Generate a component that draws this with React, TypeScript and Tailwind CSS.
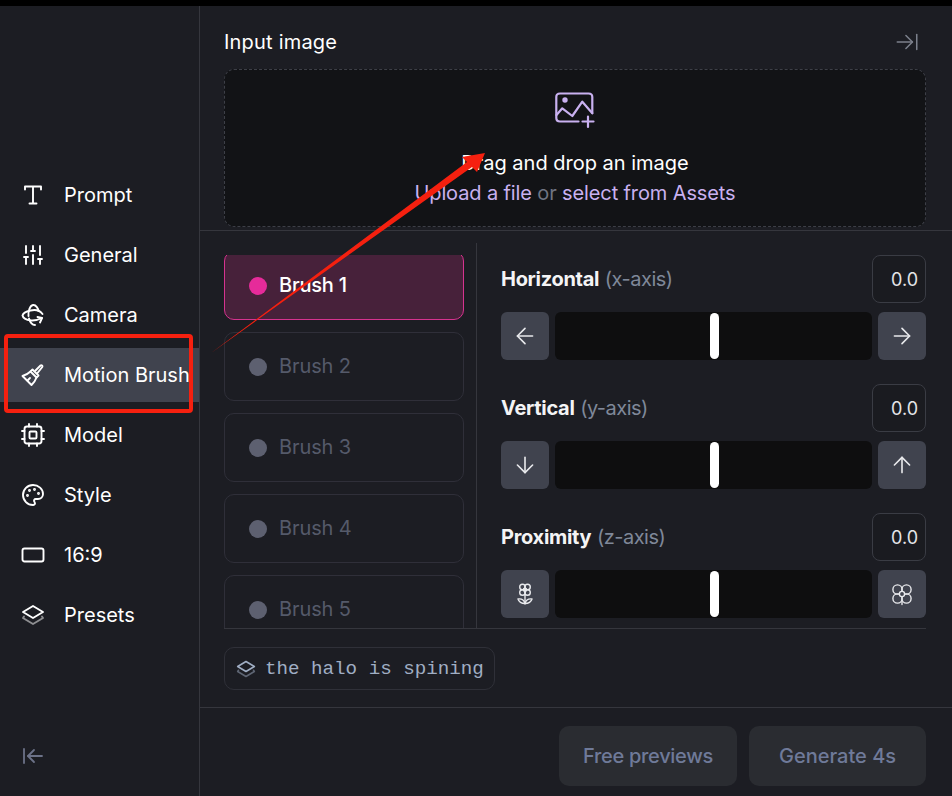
import { ArrowDown, ArrowLeft, ArrowLeftToLine, ArrowRight, ArrowRightToLine, ArrowUp, Palette, SlidersVertical } from "lucide-react";
import type { ReactNode } from "react";

const iconProps = {
  width: 24,
  height: 24,
  viewBox: "0 0 24 24",
  fill: "none",
  stroke: "currentColor",
  strokeWidth: 1.9,
  strokeLinecap: "round" as const,
  strokeLinejoin: "round" as const,
};

function TextIcon() {
  return (
    <svg {...iconProps}>
      <path d="M4 6.5V3.5H20V6.5M12 3.5V20.5M8.5 20.5H15.5" />
    </svg>
  );
}

function OrbitIcon() {
  return (
    <svg {...iconProps}>
      <path d="M21.5 11C19 7.5 14 6.5 9.5 7.5C5 8.5 2 10.5 1.5 12.5C2 15 5.5 17 10 17.5C13 17.8 17 17 21 15" />
      <path d="M7.5 13C7 8 9 2.5 12 2C15 1.5 17.5 6 17.5 8" />
      <path d="M8 15.5C9 19 11 22 14 22" />
      <path d="M16.5 14L21 15L19 19.5" />
    </svg>
  );
}

function BrushIcon() {
  return (
    <svg {...iconProps}>
      <path d="M14.5 7.5L19.5 2.5C20.5 1.7 22 3 21.3 4L16.5 10" />
      <path d="M11.5 6.5L17.5 12.5L15.5 14.5L9.5 8.5Z" />
      <path d="M9.5 8.5C7 11 4.5 12 1.5 13L10.5 22C12.5 20 14.5 17.5 15.5 14.5" />
      <path d="M6.5 17.5L9 15" />
    </svg>
  );
}

function ChipIcon() {
  return (
    <svg {...iconProps}>
      <rect x="3.5" y="3.5" width="17" height="17" rx="2.5" />
      <rect x="8.5" y="8.5" width="7" height="7" rx="1" />
      <path d="M8 1V3.5M16 1V3.5M8 20.5V23M16 20.5V23M1 8H3.5M1 16H3.5M20.5 8H23M20.5 16H23" />
    </svg>
  );
}

function RatioIcon() {
  return (
    <svg {...iconProps}>
      <rect x="1.5" y="5.5" width="21" height="13" rx="2" />
    </svg>
  );
}

function LayersIcon({ size = 24 }: { size?: number }) {
  return (
    <svg {...iconProps} width={size} height={size}>
      <path d="M12 3L22 9L12 15L2 9Z" />
      <path d="M3 13.5L2 15L12 21L22 15L21 13.5" className="opacity-50" />
    </svg>
  );
}

function ImagePlusIcon() {
  return (
    <svg width="40" height="38" viewBox="0 0 40 38" fill="none" stroke="currentColor" strokeWidth="2.2" strokeLinecap="round" strokeLinejoin="round">
      <path d="M23.5 29.5H5C2.8 29.5 1.3 28 1.3 26V5C1.3 3 2.8 1.5 5 1.5H33.5C35.8 1.5 37.3 3 37.3 5V21" />
      <path d="M1.5 23L7.3 16.3L17.3 24L27.3 9.7L37.3 21.3" />
      <circle cx="10" cy="8" r="1.6" fill="currentColor" />
      <path d="M33 24.5V35M27.5 29.5H38.5" />
    </svg>
  );
}

function SmallFlowerIcon() {
  return (
    <svg {...iconProps} strokeWidth={1.4}>
      <circle cx="9.5" cy="5" r="2.8" />
      <circle cx="14.5" cy="5" r="2.8" />
      <circle cx="9.5" cy="10.5" r="2.8" />
      <circle cx="14.5" cy="10.5" r="2.8" />
      <circle cx="12" cy="7.8" r="1.6" />
      <path d="M12 13.5V22" />
      <path d="M12 21.5C8.5 21.5 6 20 5 17C8 16.5 11 18 12 21.5C13 18 16 16.5 19 17C18 20 15.5 21.5 12 21.5Z" />
    </svg>
  );
}

function BigFlowerIcon() {
  return (
    <svg {...iconProps} strokeWidth={1.4}>
      <circle cx="7.5" cy="7.5" r="4.6" />
      <circle cx="16.5" cy="7.5" r="4.6" />
      <circle cx="7.5" cy="16.5" r="4.6" />
      <circle cx="16.5" cy="16.5" r="4.6" />
      <circle cx="12" cy="12" r="2.6" fill="#40434e" />
      <path d="M12 20V22.5" />
    </svg>
  );
}

const navItems: { label: string; icon: ReactNode; active?: boolean }[] = [
  { label: "Prompt", icon: <TextIcon /> },
  { label: "General", icon: <SlidersVertical size={24} strokeWidth={1.9} /> },
  { label: "Camera", icon: <OrbitIcon /> },
  { label: "Motion Brush", icon: <BrushIcon />, active: true },
  { label: "Model", icon: <ChipIcon /> },
  { label: "Style", icon: <Palette size={24} strokeWidth={1.9} /> },
  { label: "16:9", icon: <RatioIcon /> },
  { label: "Presets", icon: <LayersIcon /> },
];

function Sidebar() {
  return (
    <aside className="flex w-[200px] shrink-0 flex-col border-r border-[#35363d] pt-[162px] pb-[28px]">
      <nav className="flex flex-col gap-[6px]">
        {navItems.map((item) => (
          <div
            key={item.label}
            className={
              item.active
                ? "flex h-[54px] items-center gap-[19px] bg-[#40434e] pl-[21px] text-white"
                : "flex h-[54px] items-center gap-[19px] pl-[21px] text-white"
            }
          >
            <span className="flex w-[24px] shrink-0 justify-center">{item.icon}</span>
            <span className="whitespace-nowrap text-[20px] leading-none">{item.label}</span>
          </div>
        ))}
      </nav>
      <div className="mt-auto pl-[21px] text-[#6c7288]">
        <ArrowLeftToLine size={24} strokeWidth={1.8} />
      </div>
    </aside>
  );
}

function BrushRow({ name, active }: { name: string; active?: boolean }) {
  return (
    <div
      className={
        active
          ? "flex h-[69px] shrink-0 items-center gap-[12px] rounded-[10px] border border-[#d6338f] bg-[#47213a] pl-[24px] text-white"
          : "flex h-[69px] shrink-0 items-center gap-[12px] rounded-[10px] border border-[#2f2f39] pl-[24px] text-[#555a6a]"
      }
    >
      <span className={active ? "h-[18px] w-[18px] rounded-full bg-[#e62b9a]" : "h-[18px] w-[18px] rounded-full bg-[#5d6070]"} />
      <span className={active ? "pb-[2px] text-[20px] font-medium tracking-[-0.2px]" : "pb-[2px] text-[20px] tracking-[-0.1px]"}>{name}</span>
    </div>
  );
}

function SliderControl({ title, axis, left, right }: { title: string; axis: string; left: ReactNode; right: ReactNode }) {
  return (
    <div className="flex flex-col gap-[9px]">
      <div className="flex h-[48px] items-center justify-between">
        <div className="text-[20px]">
          <span className="font-bold tracking-[-0.3px] text-[#f4f4f5]">{title}</span>{" "}
          <span className="tracking-[-0.5px] text-[#7f8899]">{axis}</span>
        </div>
        <div className="flex h-[48px] w-[54px] items-center justify-end rounded-[8px] border border-[#3a3c44] bg-[#1a1b20] pr-[7px] text-[18px] text-[#e4e5e8]">
          0.0
        </div>
      </div>
      <div className="flex h-[48px] gap-[6px]">
        <button className="flex w-[48px] shrink-0 items-center justify-center rounded-[6px] bg-[#40434e] text-[#e8e9ec]">{left}</button>
        <div className="flex flex-1 items-center justify-center rounded-[6px] bg-[#0e0e0f]">
          <span className="h-[46px] w-[9px] translate-x-[1px] rounded-full bg-white" />
        </div>
        <button className="flex w-[48px] shrink-0 items-center justify-center rounded-[6px] bg-[#40434e] text-[#e8e9ec]">{right}</button>
      </div>
    </div>
  );
}

function Annotations() {
  return (
    <>
      <div className="absolute left-[4px] top-[334px] h-[79px] w-[189px] rounded-[4px] border-[4px] border-[#f5200f]" />
      <svg className="absolute left-0 top-0" width="952" height="796" viewBox="0 0 952 796" fill="#f5200f">
        <path d="M211 353L467 162L462 157L485 153L477 172L472 167Z" />
      </svg>
    </>
  );
}

export default function App() {
  return (
    <div className="relative flex h-[796px] w-[952px] flex-col overflow-hidden bg-[#1c1d23] font-['Inter',sans-serif] text-white">
      <div className="h-[6px] shrink-0 bg-black" />
      <div className="flex min-h-0 flex-1">
        <Sidebar />
        <main className="flex min-w-0 flex-1 flex-col">
          <section className="border-b border-[#35363d] pr-[26px] pl-[24px] pb-[3px]">
            <div className="flex h-[63px] items-center justify-between pt-[9px]">
              <h2 className="text-[20px] font-normal tracking-[0.2px]">Input image</h2>
              <ArrowRightToLine size={26} strokeWidth={1.4} className="mr-[6px] text-[#7c808c]" />
            </div>
            <div className="flex h-[158px] flex-col items-center rounded-[10px] border border-dashed border-[#3d3f47] bg-[#121316] pt-[22px]">
              <span className="text-[#c9b1f0]">
                <ImagePlusIcon />
              </span>
              <p className="mt-[18px] text-[20px] leading-[30px]">Drag and drop an image</p>
              <p className="text-[20px] leading-[30px] tracking-[-0.12px] text-[#6f7482]">
                <span className="text-[#c9b1f0]">Upload a file</span> or <span className="text-[#c9b1f0]">select from Assets</span>
              </p>
            </div>
          </section>

          <section className="ml-[24px] mr-[26px] flex h-[398px] shrink-0 border-b border-[#35363d] pt-[12px]">
            <div className="w-[253px] shrink-0 border-r border-[#35363d] pr-[12px] pt-[12px]">
              <div className="h-full overflow-hidden">
                <div className="-mt-[4px] flex flex-col gap-[12px]">
                  <BrushRow name="Brush 1" active />
                  <BrushRow name="Brush 2" />
                  <BrushRow name="Brush 3" />
                  <BrushRow name="Brush 4" />
                  <BrushRow name="Brush 5" />
                </div>
              </div>
            </div>
            <div className="flex flex-1 flex-col gap-[24px] pl-[24px] pt-[12px]">
              <SliderControl title="Horizontal" axis="(x-axis)" left={<ArrowLeft size={26} strokeWidth={1.5} />} right={<ArrowRight size={26} strokeWidth={1.5} />} />
              <SliderControl title="Vertical" axis="(y-axis)" left={<ArrowDown size={26} strokeWidth={1.5} />} right={<ArrowUp size={26} strokeWidth={1.5} />} />
              <SliderControl title="Proximity" axis="(z-axis)" left={<SmallFlowerIcon />} right={<BigFlowerIcon />} />
            </div>
          </section>

          <section className="flex h-[79px] shrink-0 items-start border-b border-[#35363d] pl-[24px] pt-[18px]">
            <div className="flex h-[43px] items-center gap-[9px] rounded-[10px] border border-[#2f3038] pl-[11px] pr-[10px] text-[#a0aec4]">
              <LayersIcon size={20} />
              <span className="pt-[1px] font-['Liberation_Mono',monospace] text-[19.2px]">the halo is spining</span>
            </div>
          </section>

          <section className="flex flex-1 items-start justify-end gap-[12px] pr-[26px] pt-[18px]">
            <button className="h-[60px] w-[178px] rounded-[10px] bg-[#2a2c31] text-[20px] font-medium tracking-[-0.3px] text-[#6f7a99]">Free previews</button>
            <button className="h-[60px] w-[177px] rounded-[10px] bg-[#2a2c31] text-[20px] font-medium text-[#6f7a99]">Generate 4s</button>
          </section>
        </main>
      </div>
      <Annotations />
    </div>
  );
}
